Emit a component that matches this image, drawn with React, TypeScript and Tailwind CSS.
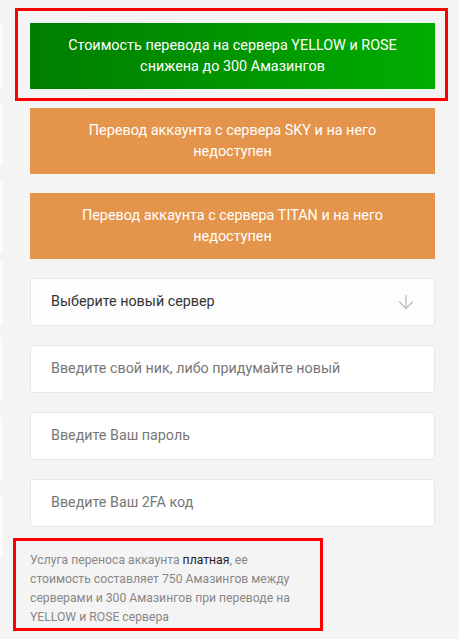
import { ArrowDown } from "lucide-react";

const font = "font-['Roboto','Liberation_Sans',sans-serif]";

const Notice = ({ lines, color }: { lines: string[]; color: string }) => (
  <div
    className={`flex h-[66px] w-[405px] flex-col items-center justify-center text-center text-[14.4px] leading-[21px] text-white ${color}`}
  >
    {lines.map((l) => (
      <span key={l}>{l}</span>
    ))}
  </div>
);

const Field = ({ placeholder }: { placeholder: string }) => (
  <div className="flex h-[48px] w-[405px] items-center rounded-[3px] border border-[#e6e6e6] bg-white px-[20px] text-[14.3px] text-[#777]">
    {placeholder}
  </div>
);

export default function App() {
  return (
    <div className={`flex min-h-[639px] w-[459px] bg-[#f4f4f4] ${font}`}>
      {/* cut-off sidebar */}
      <div className="flex w-[3px] flex-col pt-[23px]">
        <div className="h-[65px] rounded-r-[3px] bg-[#fbfbfb]" />
        <div className="mt-[14px] h-[63px] rounded-r-[3px] bg-[#fbfbfb]" />
        <div className="mt-[15px] h-[73px] rounded-r-[3px] bg-[#fbfbfb]" />
        <div className="mt-[7px] h-[65px] rounded-r-[3px] bg-[#fbfbfb]" />
        <div className="mt-[12px] h-[65px] rounded-r-[3px] bg-[#fbfbfb]" />
        <div className="mt-[15px] h-[63px] rounded-r-[3px] bg-[#fbfbfb]" />
        <div className="mt-[15px] h-[63px] rounded-r-[3px] bg-[#fbfbfb]" />
      </div>

      <div className="ml-[12px] flex flex-col pt-[8px]">
        <div className="w-[433px] border-[3px] border-[#ff0000] pb-[9px] pl-[12px] pt-[12px]">
          <Notice
            color="bg-gradient-to-r from-[#007e00] to-[#00ad00]"
            lines={["Стоимость перевода на сервера YELLOW и ROSE", "снижена до 300 Амазингов"]}
          />
        </div>

        <div className="ml-[15px] mt-[7px] flex flex-col gap-[19px]">
          <Notice
            color="bg-[#e5954b]"
            lines={["Перевод аккаунта с сервера SKY и на него", "недоступен"]}
          />
          <Notice
            color="bg-[#e5954b]"
            lines={["Перевод аккаунта с сервера TITAN и на него", "недоступен"]}
          />

          <div className="flex h-[48px] w-[405px] items-center justify-between rounded-[3px] border border-[#e6e6e6] bg-[#fdfdfd] pl-[20px] pr-[17px] text-[14.3px] text-[#333]">
            <span>Выберите новый сервер</span>
            <ArrowDown size={22} strokeWidth={1.3} className="text-[#b5b5b5]" />
          </div>

          <Field placeholder="Введите свой ник, либо придумайте новый" />
          <Field placeholder="Введите Ваш пароль" />
          <Field placeholder="Введите Ваш 2FA код" />
        </div>

        <div className="-ml-[2px] mt-[11px] w-[310px] border-[3px] border-[#ff0000] pb-[1px] pl-[14px] pt-[10px] text-[12.2px] leading-[19px] text-[#888]">
          Услуга переноса аккаунта <span className="text-[#222]">платная</span>, ее
          <br />
          стоимость составляет 750 Амазингов между
          <br />
          серверами и 300 Амазингов при переводе на
          <br />
          YELLOW и ROSE сервера
        </div>
      </div>
    </div>
  );
}
